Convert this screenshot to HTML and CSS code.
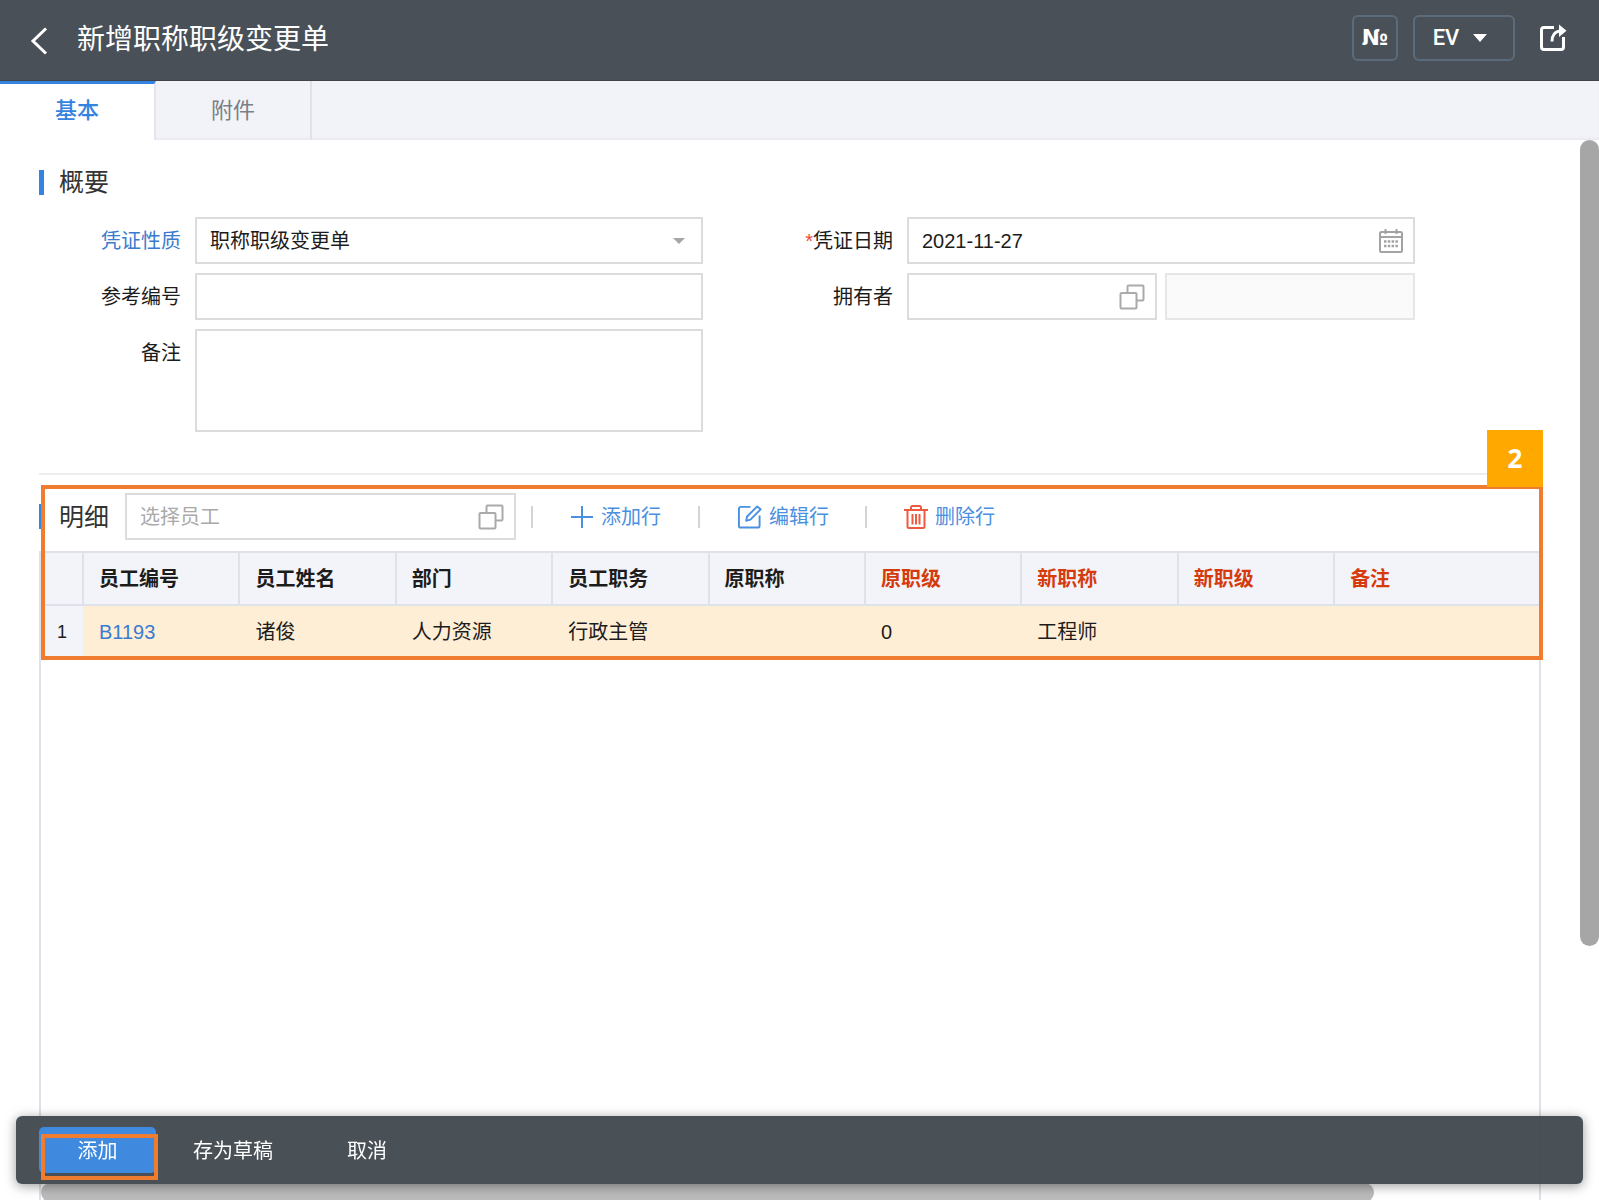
FILE: index.html
```
<!DOCTYPE html>
<html lang="zh-CN">
<head>
  <meta charset="UTF-8">
  <meta name="viewport" content="width=device-width, initial-scale=1.0">
  <title>新增职称职级变更单</title>
  <link rel="stylesheet" href="styles.css">
</head>
<body>
  <header class="topbar">
    <button type="button" class="back" aria-label="返回">
      <svg width="18" height="28" viewBox="0 0 18 28"><path d="M16 1.500 3 14l13 12.500" fill="none" stroke="#fff" stroke-width="3"/></svg>
    </button>
    <h1>新增职称职级变更单</h1>
    <button type="button" class="box-btn no-btn">№</button>
    <button type="button" class="box-btn ev-btn">EV
      <svg width="14" height="8" viewBox="0 0 14 8"><path d="M0 0h14L7 8z" fill="#fff"/></svg>
    </button>
    <button type="button" class="share" aria-label="分享">
      <svg width="28" height="28" viewBox="0 0 28 28" fill="none" stroke="#fff" stroke-width="3">
        <path d="M15 3.500H5A2.500 2.500 0 0 0 2.500 6v17A2.500 2.500 0 0 0 5 25.500h17a2.500 2.500 0 0 0 2.500-2.500V13"/>
        <path d="M13 17.500c0-6 3-10.500 9-10.500"/>
        <path d="M20 .5l7.500 6.300-7.500 6.200z" fill="#fff" stroke="none"/>
      </svg>
    </button>
  </header>

  <nav class="tabs">
    <a href="#basic" class="tab active">基本</a>
    <a href="#files" class="tab">附件</a>
  </nav>

  <main class="page" id="basic">
    <h2 class="section-title">概要</h2>
    <form class="summary">
      <div class="field">
        <label for="nature" class="link-label">凭证性质</label>
        <div class="control">
          <select id="nature"><option>职称职级变更单</option></select>
          <svg class="icon caret" width="12" height="6" viewBox="0 0 12 6"><path d="M0 0h12L6 6z" fill="#a6a6a6"/></svg>
        </div>
      </div>
      <div class="field">
        <label for="date"><span class="required">*</span>凭证日期</label>
        <div class="control">
          <input type="text" id="date" value="2021-11-27">
          <svg class="icon" width="24" height="24" viewBox="0 0 24 24" fill="none" stroke="#a3a3a3" stroke-width="2">
            <rect x="1" y="3" width="22" height="20" rx="1.500"/>
            <path d="M1 8h22M6.500 0v5M17.500 0v5"/>
            <path d="M5 12.500h14M5 17h14" stroke-width="2.500" stroke-dasharray="2.500 1.300"/>
          </svg>
        </div>
      </div>
      <div class="field">
        <label for="ref">参考编号</label>
        <div class="control"><input type="text" id="ref"></div>
      </div>
      <div class="field">
        <label for="owner">拥有者</label>
        <div class="control">
          <input type="text" id="owner">
          <svg class="icon" width="26" height="26" viewBox="0 0 26 26" fill="none" stroke="#aaa" stroke-width="2">
            <rect x="1.500" y="9" width="16" height="15.500" rx="1"/>
            <path d="M8.500 9V2.500a1 1 0 0 1 1-1h14a1 1 0 0 1 1 1v13a1 1 0 0 1-1 1h-6"/>
          </svg>
        </div>
        <div class="control"><input type="text" aria-label="拥有者名称" disabled></div>
      </div>
      <div class="field">
        <label for="memo">备注</label>
        <div class="control"><textarea id="memo"></textarea></div>
      </div>
    </form>

    <section class="detail">
      <div class="toolbar">
        <h2 class="section-title">明细</h2>
        <div class="control picker">
          <input type="text" placeholder="选择员工" aria-label="选择员工">
          <svg class="icon" width="26" height="26" viewBox="0 0 26 26" fill="none" stroke="#aaa" stroke-width="2">
            <rect x="1.500" y="9" width="16" height="15.500" rx="1"/>
            <path d="M8.500 9V2.500a1 1 0 0 1 1-1h14a1 1 0 0 1 1 1v13a1 1 0 0 1-1 1h-6"/>
          </svg>
        </div>
        <button type="button" class="tool">
          <svg width="24" height="24" viewBox="0 0 24 24"><path d="M12 1v22M1 12h22" stroke="#4a90e2" stroke-width="2"/></svg>添加行
        </button>
        <button type="button" class="tool">
          <svg width="25" height="26" viewBox="0 0 26 26" fill="none" stroke="#4a90e2" stroke-width="2" stroke-linejoin="round">
            <path d="M14 2.500H4a2 2 0 0 0-2 2V22a2 2 0 0 0 2 2h17.500a2 2 0 0 0 2-2V11.500"/>
            <path d="M9.500 17l1-4.500L21 2l3.500 3L14 15.800z"/>
          </svg>编辑行
        </button>
        <button type="button" class="tool">
          <svg width="24" height="26" viewBox="0 0 24 26" fill="none" stroke="#ee5a3f" stroke-width="2">
            <path d="M0 6h24M7 6V3.500A1.500 1.500 0 0 1 8.500 2h7A1.500 1.500 0 0 1 17 3.500V6"/>
            <path d="M3.500 6v16.500A1.500 1.500 0 0 0 5 24h14a1.500 1.500 0 0 0 1.500-1.500V6M8.500 10v10.500M12 10v10.500M15.500 10v10.500"/>
          </svg>删除行
        </button>
      </div>

      <div class="grid">
        <table>
          <colgroup>
            <col class="col-no"><col class="col"><col class="col"><col class="col"><col class="col"><col class="col"><col class="col"><col class="col"><col class="col"><col>
          </colgroup>
          <thead>
            <tr>
              <th></th>
              <th>员工编号</th>
              <th>员工姓名</th>
              <th>部门</th>
              <th>员工职务</th>
              <th>原职称</th>
              <th class="must">原职级</th>
              <th class="must">新职称</th>
              <th class="must">新职级</th>
              <th class="must">备注</th>
            </tr>
          </thead>
          <tbody>
            <tr>
              <td class="row-no">1</td>
              <td><a href="#B1193">B1193</a></td>
              <td>诸俊</td>
              <td>人力资源</td>
              <td>行政主管</td>
              <td></td>
              <td>0</td>
              <td>工程师</td>
              <td></td>
              <td></td>
            </tr>
          </tbody>
        </table>
        <div class="scroll-x"></div>
      </div>
      <div class="mark-box"></div>
      <div class="mark-no">2</div>
    </section>
    <div class="scroll-y"></div>
  </main>

  <footer class="actions">
    <div class="primary-wrap">
      <button type="submit" class="primary">添加</button>
      <div class="mark-btn"></div>
    </div>
    <button type="button">存为草稿</button>
    <button type="button">取消</button>
  </footer>
</body>
</html>
```
FILE: styles.css
```
* {
  box-sizing: border-box;
}
body {
  margin: 0;
  height: 100vh;
  display: flex;
  flex-direction: column;
  overflow: hidden;
  font-family: "Liberation Sans", "Noto Sans CJK SC", sans-serif;
  font-size: 20px;
  line-height: 30px;
  color: #1c1c1c;
  background: #fff;
}
button, input, select, textarea {
  font: inherit;
  color: inherit;
}
button {
  border: 0;
  padding: 0;
  background: none;
  cursor: pointer;
}
a {
  color: #3a7bd0;
  text-decoration: none;
}
svg {
  display: block;
  flex: none;
}

/* 顶部栏 */
.topbar {
  flex: none;
  display: flex;
  align-items: center;
  height: 81px;
  padding: 0 32px 4px 30px;
  background: #495057;
  border-bottom: 1px solid #3e444a;
  color: #fff;
}
.back {
  padding-top: 6px;
}
.topbar h1 {
  flex: 1;
  margin: 0 0 0 29px;
  font-size: 28px;
  font-weight: normal;
  line-height: 40px;
  padding-top: 3px;
}
.box-btn {
  height: 46px;
  border: 2px solid #5b6b7c;
  border-radius: 6px;
  font-family: Roboto, sans-serif;
  font-size: 22px;
  font-weight: 500;
}
.no-btn {
  width: 46px;
  margin-right: 15px;
  font-family: "DejaVu Sans", sans-serif;
  font-weight: bold;
}
.ev-btn {
  display: flex;
  align-items: center;
  justify-content: center;
  gap: 14px;
  width: 102px;
  margin-right: 24px;
  padding-right: 8px;
}

.tabs {
  flex: none;
  display: flex;
  height: 59px;
  background: #f2f3f8;
  box-shadow: inset 0 -2px 2px #e9eaf0;
}
.tab {
  width: 156px;
  border-right: 2px solid #e0e2e9;
  font-size: 22px;
  line-height: 60px;
  text-align: center;
  color: #7b7f85;
}
.tab.active {
  border-top: 3px solid #3583e0;
  border-right-color: #e4e6ec;
  background: #fff;
  line-height: 54px;
  font-weight: 500;
  color: #3583e0;
}

.page {
  flex: 1;
  position: relative;
  display: flex;
  flex-direction: column;
  min-height: 0;
  padding: 24px 58px 0 39px;
}
.section-title {
  display: flex;
  align-items: center;
  gap: 15px;
  margin: 0;
  font-size: 25px;
  font-weight: normal;
  line-height: 36px;
  color: #333;
}
.section-title::before {
  content: "";
  width: 5px;
  height: 25px;
  background: #3583e0;
}

.summary {
  display: grid;
  grid-template-columns: 1fr 1fr;
  row-gap: 9px;
  padding: 17px 78px 41px 0;
  border-bottom: 2px solid #eee;
}
.field {
  display: flex;
  gap: 8px;
  padding-right: 48px;
}
.field label {
  flex: none;
  width: 142px;
  margin-right: 6px;
  line-height: 49px;
  height: 47px;
  text-align: right;
}
.field .link-label {
  color: #3a7bd0;
}
.required {
  color: #f04a3a;
}
.control {
  flex: 1;
  position: relative;
  min-width: 0;
}
.control input, .control select, .control textarea {
  display: block;
  width: 100%;
  height: 47px;
  padding: 1px 13px 0;
  border: 2px solid #dcdcdc;
  border-radius: 0;
  background: #fff;
  appearance: none;
  outline: none;
}
.control textarea {
  height: 103px;
  resize: none;
}
.control input:disabled {
  background: #fafafa;
  border-color: #e6e6e6;
}
.control input::placeholder {
  color: #aaa;
}
.icon {
  position: absolute;
  top: 0;
  bottom: 0;
  right: 12px;
  margin: auto 0;
  pointer-events: none;
}
.caret {
  right: 18px;
}

.detail {
  flex: 1;
  position: relative;
  display: flex;
  flex-direction: column;
}
.toolbar {
  flex: none;
  display: flex;
  align-items: center;
  height: 76px;
  padding-top: 7px;
}
.picker {
  flex: none;
  width: 391px;
  margin: 0 15px 0 16px;
}
.tool {
  position: relative;
  display: flex;
  align-items: center;
  gap: 7px;
  width: 167px;
  padding-left: 39px;
  color: #4a90e2;
}
.tool::before {
  content: "";
  position: absolute;
  left: 0;
  width: 2px;
  height: 22px;
  background: #d4d4d4;
}

.grid {
  flex: 1;
  position: relative;
  border: 2px solid #e0e2ea;
  border-bottom: 0;
}
table {
  width: 100%;
  table-layout: fixed;
  border-collapse: collapse;
}
.col-no {
  width: 42px;
}
.col {
  width: 10.44%;
}
th, td {
  height: 52px;
  padding: 0 0 0 16px;
  text-align: left;
  white-space: nowrap;
}
th {
  padding-left: 15px;
  background: #f2f4f9;
  border-right: 2px solid #dfe2ea;
  border-bottom: 2px solid #dfe2ea;
}
th:last-child {
  border-right: 0;
}
th.must {
  color: #d63a0c;
}
td {
  background: #ffeed6;
}
td.row-no {
  padding: 0;
  background: #f2f4f9;
  font-size: 18px;
  text-align: center;
}

/* 步骤标注 */
.mark-box {
  position: absolute;
  top: 10px;
  left: 2px;
  right: -2px;
  height: 175px;
  border: 4px solid #f07c30;
  pointer-events: none;
}
.mark-no {
  position: absolute;
  top: -45px;
  right: -2px;
  width: 56px;
  height: 57px;
  background: #ffa900;
  color: #fff;
  font-family: "Open Sans", sans-serif;
  font-size: 26px;
  font-weight: bold;
  line-height: 57px;
  text-align: center;
}
.mark-btn {
  position: absolute;
  top: 7px;
  left: 2px;
  width: 117px;
  height: 46px;
  border: 4px solid #f07c30;
  pointer-events: none;
}

.scroll-x {
  position: absolute;
  left: 0;
  bottom: -2px;
  width: 89%;
  height: 19px;
  border-radius: 10px;
  background: #bbb;
}
.scroll-y {
  position: absolute;
  top: 0;
  right: 0;
  width: 19px;
  height: 76%;
  border-radius: 10px;
  background: #a6a6a6;
}

.actions {
  position: fixed;
  left: 16px;
  right: 16px;
  bottom: 16px;
  display: flex;
  align-items: center;
  height: 68px;
  padding-left: 23px;
  border-radius: 6px;
  background: rgba(67, 74, 81, 0.97);
  box-shadow: 0 2px 12px rgba(0, 0, 0, 0.4);
  color: #fff;
}
.actions button {
  height: 46px;
  padding: 1px 37px 0;
}
.primary-wrap {
  position: relative;
}
.actions .primary {
  width: 117px;
  border-radius: 5px;
  background: #3f89df;
}
```
